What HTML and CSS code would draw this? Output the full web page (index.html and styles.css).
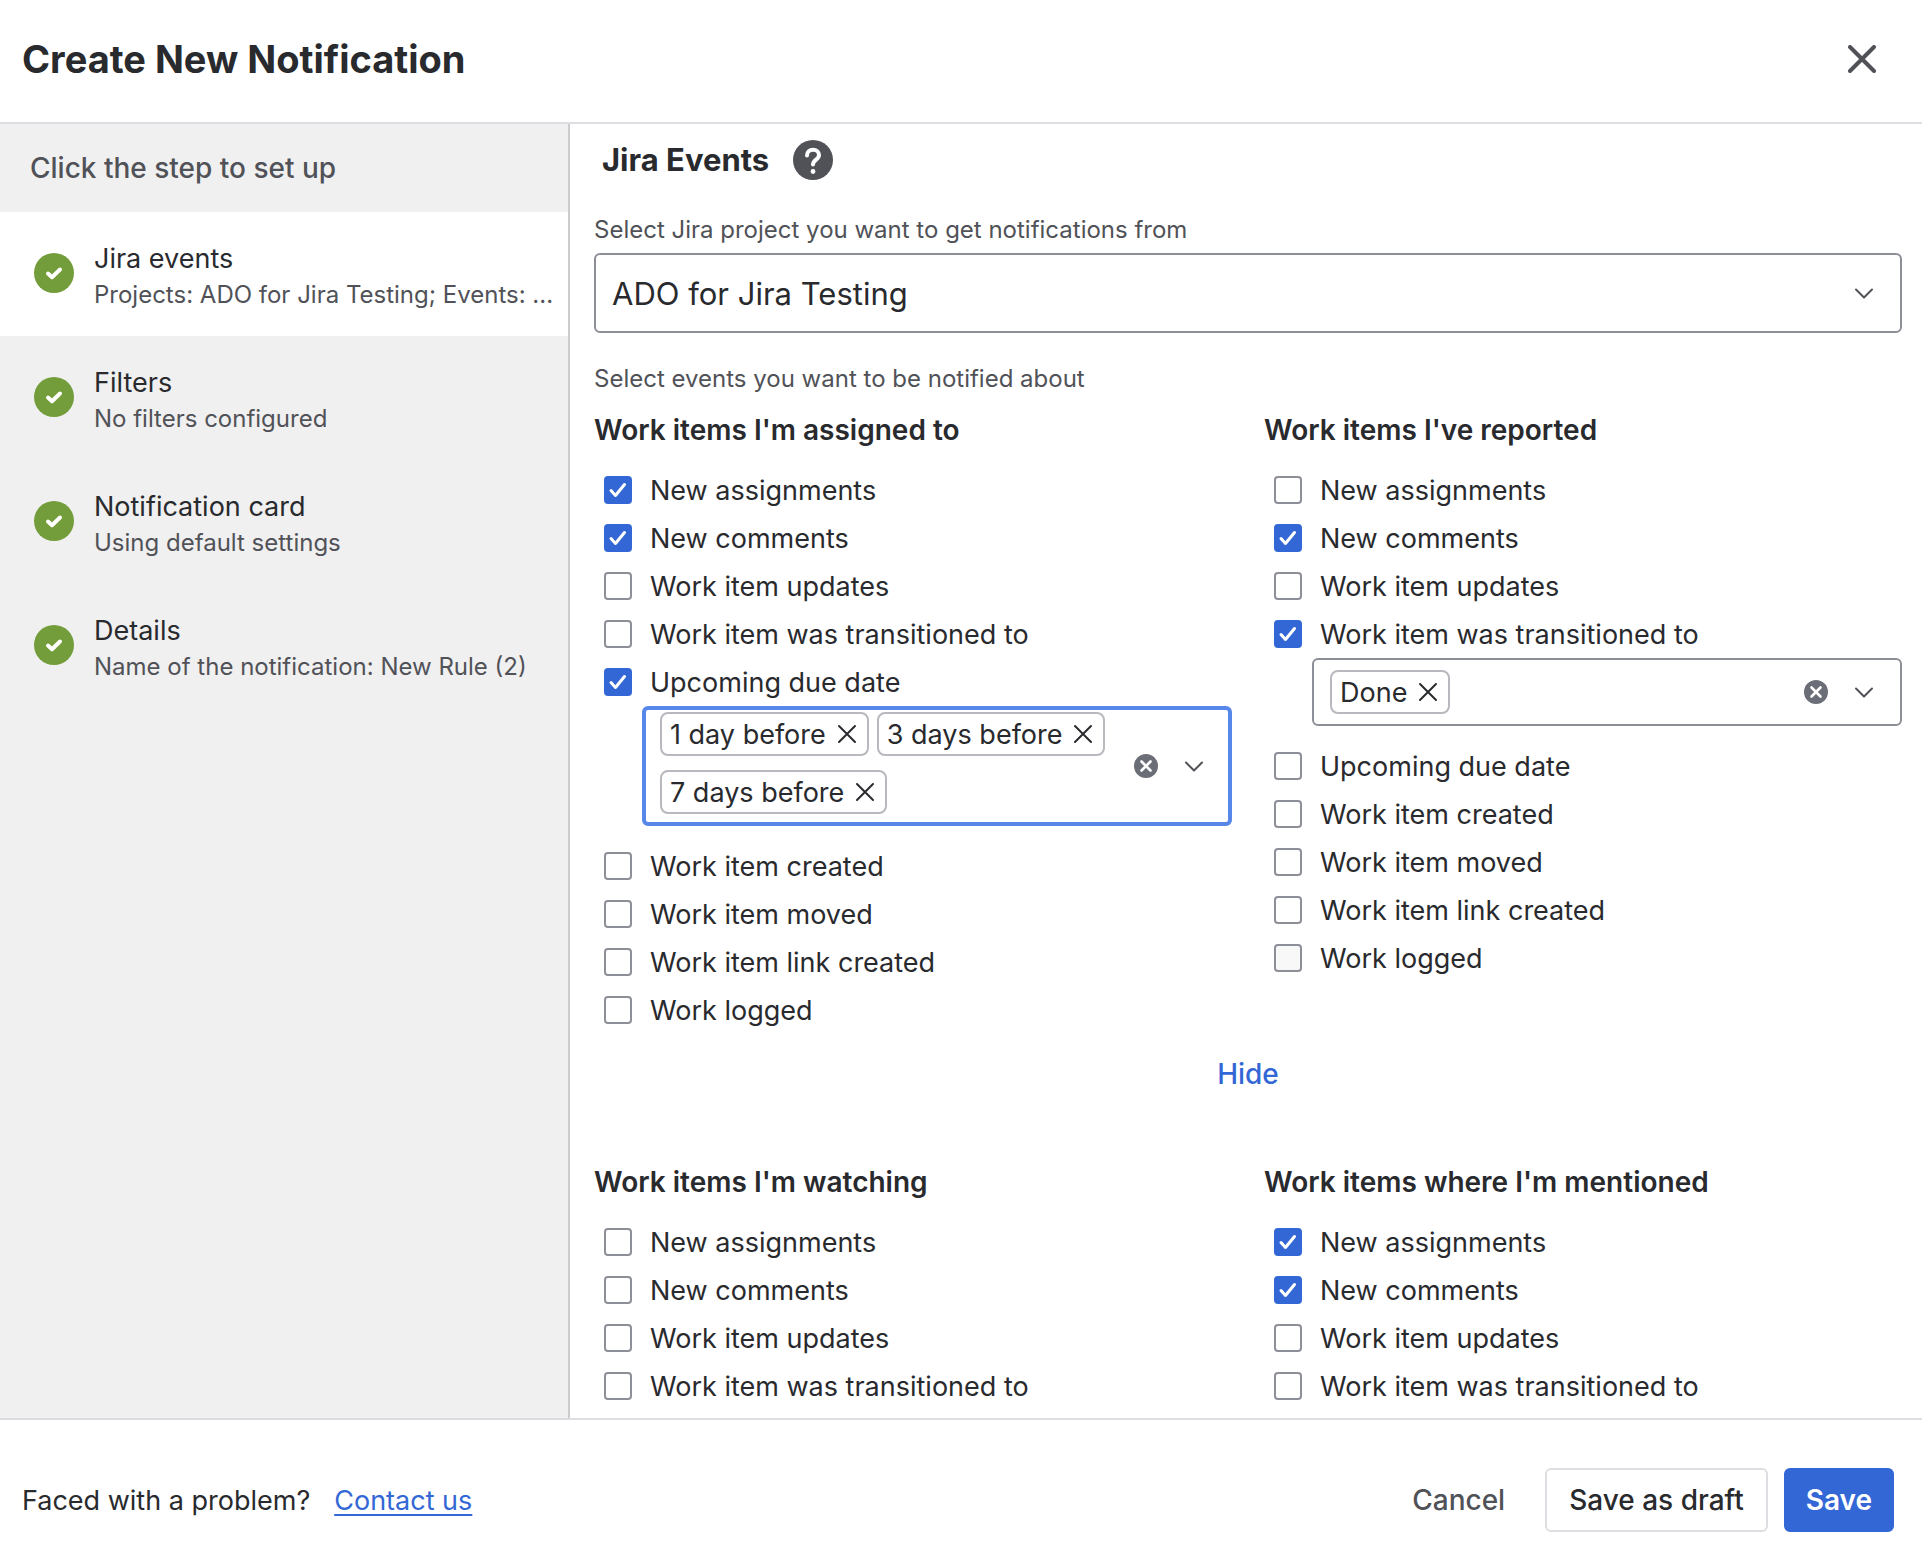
FILE: index.html
```html
<!DOCTYPE html>
<html lang="en">

<head>

  <meta charset="UTF-8">
  <meta name="viewport" content="width=device-width, initial-scale=1">

  <title>Create New Notification</title>

  <link rel="stylesheet" href="styles.css">

</head>

<body>

  <!-- shared icons -->
  <svg class="sprite" aria-hidden="true">
    <symbol id="cross" viewBox="0 0 20 20">
      <path d="M2 2L18 18M18 2L2 18" fill="none" stroke="currentColor" stroke-width="2" stroke-linecap="round"/>
    </symbol>
    <symbol id="chevron" viewBox="0 0 24 24">
      <path d="M4 8.5L12 16.5L20 8.5" fill="none" stroke="currentColor" stroke-width="2" stroke-linecap="round" stroke-linejoin="round"/>
    </symbol>
    <symbol id="clear" viewBox="0 0 24 24">
      <circle cx="12" cy="12" r="12" fill="#6b6e76"/>
      <path d="M7.5 7.5L16.5 16.5M16.5 7.5L7.5 16.5" fill="none" stroke="#fff" stroke-width="2.6" stroke-linecap="round"/>
    </symbol>
    <symbol id="done" viewBox="0 0 40 40">
      <circle cx="20" cy="20" r="20" fill="#739c3a"/>
      <path d="M14 20.5L18 24.2L26 16.5" fill="none" stroke="#fff" stroke-width="4" stroke-linecap="round" stroke-linejoin="round"/>
    </symbol>
  </svg>

  <header class="header">
    <h1>Create New Notification</h1>
    <button class="close" type="button" aria-label="Close">
      <svg viewBox="0 0 28 28"><path d="M2 2L26 26M26 2L2 26" fill="none" stroke="currentColor" stroke-width="4" stroke-linecap="round"/></svg>
    </button>
  </header>

  <div class="middle">

    <nav class="sidebar">
      <h2>Click the step to set up</h2>
      <button class="step active" type="button">
        <svg class="step-icon"><use href="#done"/></svg>
        <span class="step-text">
          <span class="step-title">Jira events</span>
          <span class="step-sub">Projects: ADO for Jira Testing; Events: ...</span>
        </span>
      </button>
      <button class="step" type="button">
        <svg class="step-icon"><use href="#done"/></svg>
        <span class="step-text">
          <span class="step-title">Filters</span>
          <span class="step-sub">No filters configured</span>
        </span>
      </button>
      <button class="step" type="button">
        <svg class="step-icon"><use href="#done"/></svg>
        <span class="step-text">
          <span class="step-title">Notification card</span>
          <span class="step-sub">Using default settings</span>
        </span>
      </button>
      <button class="step" type="button">
        <svg class="step-icon"><use href="#done"/></svg>
        <span class="step-text">
          <span class="step-title">Details</span>
          <span class="step-sub">Name of the notification: New Rule (2)</span>
        </span>
      </button>
    </nav>

    <main class="content">

      <div class="content-title">
        <h2>Jira Events</h2>
        <button class="help" type="button" aria-label="Help">
          <svg viewBox="0 0 40 40">
            <circle cx="20" cy="20" r="20" fill="#505258"/>
            <path d="M14 15.5C14 11.8 16.6 9.8 20 9.8C23.4 9.8 26 12 26 15.2C26 19.6 20 19.8 20 24.6" fill="none" stroke="#fff" stroke-width="4" stroke-linecap="round"/>
            <circle cx="20" cy="31.5" r="2.4" fill="#fff"/>
          </svg>
        </button>
      </div>

      <label class="hint" for="project">Select Jira project you want to get notifications from</label>
      <div class="project">
        <select id="project">
          <option>ADO for Jira Testing</option>
        </select>
        <svg class="project-arrow"><use href="#chevron"/></svg>
      </div>

      <p class="hint events-hint">Select events you want to be notified about</p>

      <div class="groups">

        <section>
          <h3>Work items I'm assigned to</h3>
          <label class="event"><input type="checkbox" checked>New assignments</label>
          <label class="event"><input type="checkbox" checked>New comments</label>
          <label class="event"><input type="checkbox">Work item updates</label>
          <label class="event"><input type="checkbox">Work item was transitioned to</label>
          <label class="event"><input type="checkbox" checked>Upcoming due date</label>
          <div class="multi focused">
            <div class="tags">
              <span class="tag">1 day before<button type="button" aria-label="Remove 1 day before"><svg><use href="#cross"/></svg></button></span>
              <span class="tag">3 days before<button type="button" aria-label="Remove 3 days before"><svg><use href="#cross"/></svg></button></span>
              <span class="tag">7 days before<button type="button" aria-label="Remove 7 days before"><svg><use href="#cross"/></svg></button></span>
            </div>
            <button class="multi-button" type="button" aria-label="Clear"><svg><use href="#clear"/></svg></button>
            <button class="multi-button" type="button" aria-label="Open"><svg><use href="#chevron"/></svg></button>
          </div>
          <label class="event"><input type="checkbox">Work item created</label>
          <label class="event"><input type="checkbox">Work item moved</label>
          <label class="event"><input type="checkbox">Work item link created</label>
          <label class="event"><input type="checkbox">Work logged</label>
        </section>

        <section>
          <h3>Work items I've reported</h3>
          <label class="event"><input type="checkbox">New assignments</label>
          <label class="event"><input type="checkbox" checked>New comments</label>
          <label class="event"><input type="checkbox">Work item updates</label>
          <label class="event"><input type="checkbox" checked>Work item was transitioned to</label>
          <div class="multi">
            <div class="tags">
              <span class="tag">Done<button type="button" aria-label="Remove Done"><svg><use href="#cross"/></svg></button></span>
            </div>
            <button class="multi-button" type="button" aria-label="Clear"><svg><use href="#clear"/></svg></button>
            <button class="multi-button" type="button" aria-label="Open"><svg><use href="#chevron"/></svg></button>
          </div>
          <label class="event"><input type="checkbox">Upcoming due date</label>
          <label class="event"><input type="checkbox">Work item created</label>
          <label class="event"><input type="checkbox">Work item moved</label>
          <label class="event"><input type="checkbox">Work item link created</label>
          <label class="event"><input class="hovered" type="checkbox">Work logged</label>
        </section>

      </div>

      <button class="toggle" type="button">Hide</button>

      <div class="groups">

        <section>
          <h3>Work items I'm watching</h3>
          <label class="event"><input type="checkbox">New assignments</label>
          <label class="event"><input type="checkbox">New comments</label>
          <label class="event"><input type="checkbox">Work item updates</label>
          <label class="event"><input type="checkbox">Work item was transitioned to</label>
        </section>

        <section>
          <h3>Work items where I'm mentioned</h3>
          <label class="event"><input type="checkbox" checked>New assignments</label>
          <label class="event"><input type="checkbox" checked>New comments</label>
          <label class="event"><input type="checkbox">Work item updates</label>
          <label class="event"><input type="checkbox">Work item was transitioned to</label>
        </section>

      </div>

    </main>

  </div>

  <footer class="footer">
    <span>Faced with a problem?</span>
    <a href="#contact">Contact us</a>
    <div class="actions">
      <button class="cancel" type="button">Cancel</button>
      <button class="draft" type="button">Save as draft</button>
      <button class="save" type="button">Save</button>
    </div>
  </footer>

</body>

</html>
```

FILE: styles.css
```css
* {
  box-sizing: border-box;
}

body {
  display: flex;
  flex-direction: column;
  height: 100vh;
  margin: 0;
  font-family: Inter, "Liberation Sans", sans-serif;
  font-size: 27px;
  color: #292a2e;
  background: #fff;
}

h1, h2, h3, p {
  margin: 0;
}

button {
  margin: 0;
  padding: 0;
  border: 0;
  background: none;
  font: inherit;
  color: inherit;
  cursor: pointer;
}

svg {
  display: block;
}

.sprite {
  display: none;
}

/* header */
.header {
  display: flex;
  align-items: center;
  justify-content: space-between;
  padding: 34px 46px 38px 22px;
  border-bottom: 2px solid #dddee1;
}

.header h1 {
  font-size: 38px;
  line-height: 50px;
  font-weight: 700;
}

.close svg {
  width: 28px;
  height: 28px;
  color: #505258;
}

.middle {
  display: flex;
  flex: 1;
  min-height: 0;
}

/* steps on the left */
.sidebar {
  flex: none;
  width: 570px;
  border-right: 2px solid #cccccc;
  background: #f0f0f0;
}

.sidebar h2 {
  padding: 24px 30px;
  font-size: 28px;
  line-height: 40px;
  font-weight: 500;
  color: #505258;
}

.step {
  display: flex;
  align-items: flex-start;
  gap: 20px;
  width: 100%;
  padding: 29px 10px 23px 34px;
  text-align: left;
}

.step.active {
  background: #fff;
}

.step-icon {
  flex: none;
  width: 40px;
  height: 40px;
  margin-top: 12px;
}

.step-text {
  min-width: 0;
  line-height: 36px;
}

.step-title {
  display: block;
}

.step-sub {
  display: block;
  overflow: hidden;
  font-size: 24px;
  color: #505258;
  text-overflow: ellipsis;
  white-space: nowrap;
}

/* right part */
.content {
  flex: 1;
  min-width: 0;
  padding: 16px 20px 0 24px;
  overflow: hidden;
}

.content-title {
  display: flex;
  align-items: center;
  gap: 24px;
  margin-bottom: 34px;
  padding-left: 8px;
}

.content-title h2 {
  font-size: 31px;
  line-height: 40px;
  font-weight: 700;
}

.help svg {
  width: 40px;
  height: 40px;
}

.hint {
  display: block;
  font-size: 24px;
  line-height: 32px;
  color: #505258;
}

.project {
  position: relative;
  margin: 7px 0 30px;
}

.project select {
  display: block;
  width: 100%;
  height: 80px;
  padding: 0 16px;
  border: 2px solid #8c8f97;
  border-radius: 6px;
  background: #fff;
  font: inherit;
  font-size: 31px;
  color: inherit;
  appearance: none;
}

.project-arrow {
  position: absolute;
  top: 28px;
  right: 26px;
  width: 24px;
  height: 24px;
  color: #505258;
  pointer-events: none;
}

.events-hint {
  margin-bottom: 15px;
}

.groups {
  display: grid;
  grid-template-columns: 1fr 1fr;
  gap: 32px;
  align-items: start;
}

.groups h3 {
  margin-bottom: 16px;
  font-size: 28px;
  line-height: 40px;
  font-weight: 600;
}

.event {
  display: flex;
  align-items: center;
  gap: 18px;
  height: 48px;
  padding-left: 10px;
}

.event input {
  flex: none;
  width: 28px;
  height: 28px;
  margin: 0;
  border: 2px solid #8c8f97;
  border-radius: 4px;
  background: #fff;
  appearance: none;
}

.event input:checked {
  border-color: #3367d6;
  background: #3367d6 url("data:image/svg+xml,%3Csvg xmlns='http://www.w3.org/2000/svg' viewBox='0 0 28 28'%3E%3Cpath d='M7 14.5L11.5 19.5L20.5 8.5' fill='none' stroke='%23fff' stroke-width='3' stroke-linecap='round' stroke-linejoin='round'/%3E%3C/svg%3E") center / 28px 28px no-repeat;
}

.event input.hovered {
  background: #f8f8f8;
}

/* multi select with tags */
.multi {
  display: flex;
  align-items: center;
  gap: 24px;
  margin: 0 0 16px 48px;
  padding: 10px 24px 10px 16px;
  border: 2px solid #8c8f97;
  border-radius: 6px;
}

.multi.focused {
  padding: 2px 22px 2px 14px;
  border: 4px solid #5787e8;
}

.tags {
  display: flex;
  flex: 1;
  flex-wrap: wrap;
  gap: 14px 8px;
  margin-right: -16px;
}

.multi.focused .tags {
  padding-bottom: 6px;
}

.tag {
  display: flex;
  align-items: center;
  gap: 11px;
  height: 44px;
  padding: 0 10px 0 8px;
  border: 2px solid #b7b9be;
  border-radius: 8px;
  white-space: nowrap;
}

.tag svg {
  width: 20px;
  height: 20px;
}

.multi-button svg {
  width: 24px;
  height: 24px;
  color: #505258;
}

.toggle {
  display: block;
  margin: 16px auto 64px;
  font-size: 28px;
  line-height: 48px;
  font-weight: 500;
  color: #3367d6;
}

/* footer */
.footer {
  display: flex;
  align-items: center;
  gap: 24px;
  padding: 48px 28px 14px 22px;
  border-top: 2px solid #dddee1;
}

.footer a {
  color: #3367d6;
  text-underline-offset: 4px;
  text-decoration-thickness: 2px;
}

.actions {
  display: flex;
  gap: 16px;
  margin-left: auto;
  font-size: 28px;
  font-weight: 500;
}

.actions button {
  height: 64px;
  padding: 0 22px;
  border: 2px solid transparent;
  border-radius: 6px;
}

.actions .cancel {
  color: #505258;
}

.actions .draft {
  border-color: #dddee1;
}

.actions .save {
  padding: 0 20px;
  border-color: #3367d6;
  background: #3367d6;
  font-weight: 600;
  color: #fff;
}
```
